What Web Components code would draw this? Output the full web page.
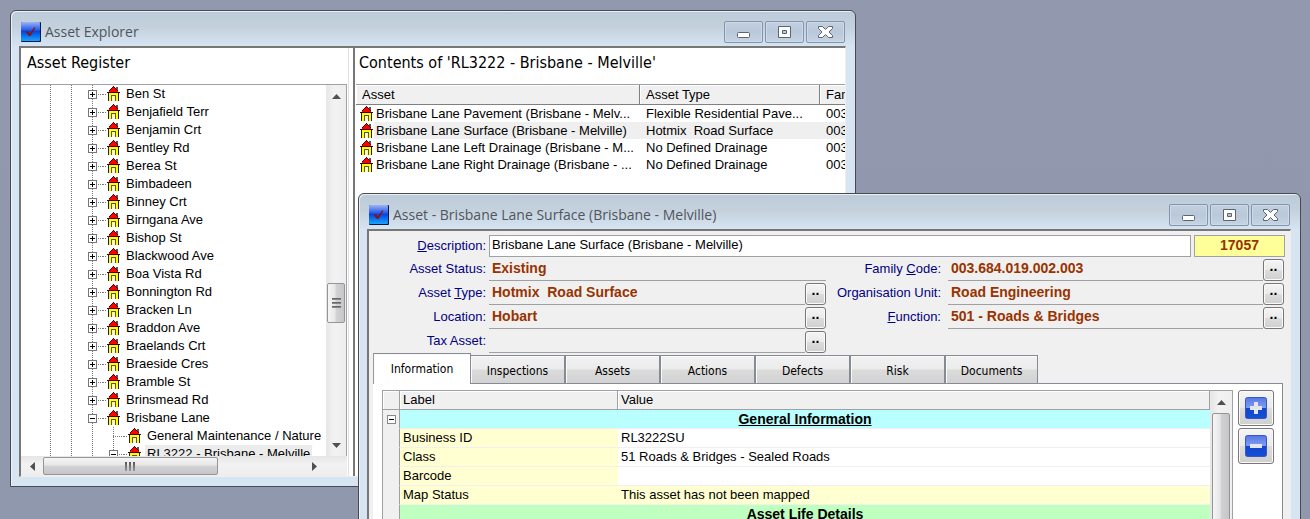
<!DOCTYPE html>
<html lang="en">
<head>
<meta charset="utf-8">
<title>Asset Explorer</title>
<style>
  html, body {
    height: 100%;
  }
  body {
    margin: 0;
    overflow: hidden;
    background: linear-gradient(#9299ae, #9098ae);
    color: #000;
    font: 13px/16px "Liberation Sans", Arial, sans-serif;
  }
  .desktop {
    position: relative;
    height: 100%;
    overflow: hidden;
  }
  /* windows on the desktop */
  .explorer {
    position: absolute;
    left: 10px;
    top: 10px;
    right: 454px;
    bottom: 32px;
  }
  .asset {
    position: absolute;
    left: 358px;
    top: 193px;
    right: 9px;
    min-height: 100%;
  }
  .panes {
    flex: 1;
    display: flex;
    min-width: 0;
    min-height: 0;
  }
  .splitter {
    width: 4px;
    border-left: 1px solid #e0e0e0;
    border-right: 2px solid #777;
    margin: 0 1px;
    background: #fff;
  }
  tree-pane {
    width: 326px;
    flex: none;
  }
  list-pane {
    flex: 1;
    min-width: 0;
  }
</style>
</head>
<body>

<template id="app-window">
  <style>
    *, *:before, *:after {
      box-sizing: border-box;
    }
    :host {
      display: flex;
      flex-direction: column;
      box-sizing: border-box;
      padding: 0 9px 9px 8px;
      border: 1px solid #484a4e;
      border-radius: 6px 6px 0 0;
      background: #d7e4f2;
      background: linear-gradient(#bccbd9, #c4d1dd 16px, #d7e4f2 36px);
      box-shadow: inset 1px 1px 0 #e9f0f7;
    }
    header {
      display: flex;
      align-items: center;
      gap: 4px;
      height: 35px;
      padding: 7px 1px 0 2px;
    }
    h1 {
      flex: 1;
      margin: 0;
      color: #4f555c;
      font: 14px/20px "Open Sans", "Noto Sans", sans-serif;
      white-space: nowrap;
    }
    nav {
      display: flex;
      gap: 2px;
    }
    nav button {
      width: 39px;
      height: 22px;
      padding: 0;
      border: 1px solid #8494ae;
      border-radius: 2px;
      background: linear-gradient(#c2cfde, #b9c9da 50%, #c6d4e3);
      box-shadow: inset 0 0 0 1px #cddae7;
    }
    svg {
      display: block;
      margin: 0 auto;
    }
    main {
      flex: 1;
      display: flex;
      flex-direction: column;
      min-height: 0;
      border: 2px solid #777;
      border-color: #777 #eee #eee #777;
      border-width: 2px 1px 1px 2px;
      background: var(--face, #fff);
    }
  </style>
  <header>
    <svg width="20" height="20" viewBox="0 0 20 20">
      <defs>
        <linearGradient id="g" x1="0" y1="0" x2="0" y2="1">
          <stop offset="0" stop-color="#9db4f4"/>
          <stop offset=".4" stop-color="#2a5fe8"/>
          <stop offset=".5" stop-color="#0546dc"/>
          <stop offset="1" stop-color="#18a4ff"/>
        </linearGradient>
      </defs>
      <rect width="20" height="20" rx="1" fill="#001848"/>
      <rect width="19" height="19" rx="1" fill="url(#g)"/>
      <path d="M4.500 10l2.500-1 2 2.500 4-6 1.500 0L9.500 14H8z" fill="#8a1218"/>
    </svg>
    <h1></h1>
    <nav>
      <button aria-label="Minimize"><svg width="15" height="14"><rect x="1.500" y="7.500" width="12" height="5" rx="1" fill="#fff" stroke="#5c6474"/></svg></button>
      <button aria-label="Maximize"><svg width="14" height="14"><path d="M.5 1.500h12v11H.5z M4.500 5.500v3h4v-3z" fill="#fff" fill-rule="evenodd" stroke="#5c6474"/></svg></button>
      <button aria-label="Close"><svg width="15" height="14"><path d="M.5 1.500h4l3 3 3-3h4v2L11 7l3.500 3.500v2h-4l-3-3-3 3h-4v-2L4 7 .5 3.500z" fill="#fff" stroke="#5c6474" stroke-linejoin="round"/></svg></button>
    </nav>
  </header>
  <main><slot></slot></main>
</template>

<template id="house-icon">
  <style>
    :host {
      display: block;
      flex: none;
      width: 13px;
      height: 15px;
      white-space: normal;
    }
    svg {
      display: block;
    }
  </style>
  <svg width="13" height="15" shape-rendering="crispEdges">
    <path d="M9 1h2v5H9z" fill="#555"/>
    <path d="M2 6h9v9H2z" fill="#ff0"/>
    <path d="M1 7h1v8H1zM11 7h1v8h-1z" fill="#222"/>
    <path d="M6 1h1v1h1v1h1v1h1v1h1v1h1v1H1V6h1V5h1V4h1V3h1V2h1z" fill="#f00"/>
    <path d="M6 0h1v1H6zM5 1h1v1H5zM7 1h1v1H7zM4 2h1v1H4zM8 2h1v1H8zM3 3h1v1H3zM9 3h1v1H9zM2 4h1v1H2zM10 4h1v1h-1zM0 6h13v1H0z" fill="#400"/>
    <path d="M4 9h5v6H4z" fill="#555"/>
    <path d="M5 10h3v5H5z" fill="#ff8"/>
    <path d="M6 11h1v4H6z" fill="#fff"/>
  </svg>
</template>

<template id="scroll-bar">
  <style>
    *, *:before, *:after {
      box-sizing: border-box;
    }
    :host {
      display: flex;
      flex-direction: column;
      flex: none;
      width: 20px;
      background: linear-gradient(90deg, #e6e6e6, #f2f2f2 40%, #eee);
    }
    :host([horizontal]) {
      flex-direction: row;
      width: auto;
      height: 20px;
      background: linear-gradient(#e6e6e6, #f2f2f2 40%, #eee);
    }
    button {
      flex: none;
      width: 100%;
      height: 22px;
      padding: 0;
      border: 0;
      background: none;
    }
    :host([horizontal]) button {
      width: 22px;
      height: 20px;
    }
    svg {
      display: block;
      margin: 0 auto;
    }
    .end svg {
      transform: rotate(180deg);
    }
    :host([horizontal]) svg {
      transform: rotate(-90deg);
    }
    :host([horizontal]) .end svg {
      transform: rotate(90deg);
    }
    .track {
      flex: 1;
      display: flex;
      flex-direction: inherit;
      padding: 0 1px;
      min-height: 0;
      min-width: 0;
    }
    :host([horizontal]) .track {
      padding: 1px 0;
    }
    .before {
      flex: var(--before, 0);
    }
    .after {
      flex: var(--after, 1);
    }
    .thumb {
      flex: var(--thumb, 1);
      display: flex;
      flex-direction: inherit;
      align-items: center;
      justify-content: center;
      gap: 2px;
      border: 1px solid #959595;
      border-radius: 2px;
      background: linear-gradient(90deg, #f6f6f6, #e6e6e6 45%, #d2d2d4 50%, #c6c6ca);
    }
    :host([horizontal]) .thumb {
      background: linear-gradient(#f6f6f6, #e6e6e6 45%, #d2d2d4 50%, #c6c6ca);
    }
    .thumb i {
      width: 9px;
      height: 2px;
      background: linear-gradient(#555, #999);
    }
    :host([horizontal]) .thumb i {
      width: 2px;
      height: 9px;
    }
  </style>
  <button class="start" aria-label="Scroll back"><svg width="9" height="5"><path d="M0 5l4.500-5L9 5z" fill="#505050"/></svg></button>
  <div class="track"><div class="before"></div><div class="thumb"><i></i><i></i><i></i></div><div class="after"></div></div>
  <button class="end" aria-label="Scroll on"><svg width="9" height="5"><path d="M0 5l4.500-5L9 5z" fill="#505050"/></svg></button>
</template>

<template id="tree-pane">
  <style>
    :host {
      display: flex;
      flex-direction: column;
      background: #fff;
    }
    h2 {
      margin: 0;
      height: 37px;
      padding: 5px 6px 0;
      box-sizing: border-box;
      border-bottom: 1px solid #a0a0a8;
      font: 16px/20px "DejaVu Sans Condensed", Tahoma, sans-serif;
    }
    .body {
      flex: 1;
      display: flex;
      min-height: 0;
      border-right: 1px solid #a0a0a8;
    }
    .items {
      flex: 1;
      min-width: 0;
      overflow: hidden;
      padding: 0 0 0 19px;
    }
    .body scroll-bar {
      --before: 176;
      --thumb: 38;
      --after: 111;
    }
    .foot {
      --before: 0;
      --thumb: 174;
      --after: 86;
      padding: 0 22px 0 0;
    }
  </style>
  <h2>Asset Register</h2>
  <div class="body">
    <div class="items"></div>
    <scroll-bar></scroll-bar>
  </div>
  <scroll-bar class="foot" horizontal></scroll-bar>
</template>

<template id="tree-item">
  <style>
    :host {
      display: flex;
      height: 18px;
      align-items: center;
      line-height: 18px;
      white-space: nowrap;
      --dots: repeating-linear-gradient(#777 0 1px, transparent 1px 2px);
    }
    .guide, .node {
      flex: none;
      width: 21px;
      height: 18px;
      background: var(--dots) 10px 0 / 1px 18px no-repeat;
    }
    .node {
      display: flex;
      align-items: center;
      justify-content: center;
      background: var(--dots) 10px 0 / 1px 18px no-repeat,
        repeating-linear-gradient(90deg, #777 0 1px, transparent 1px 2px) 10px 9px / 11px 1px no-repeat;
    }
    .pic {
      flex: none;
      display: flex;
      justify-content: center;
      width: 21px;
      height: 18px;
      background: repeating-linear-gradient(90deg, #777 0 1px, transparent 1px 2px) 0 9px / 3px 1px no-repeat;
    }
    .pic house-icon {
      margin-top: 1px;
    }
    button {
      box-sizing: border-box;
      width: 9px;
      height: 9px;
      padding: 0;
      border: 1px solid #777;
      background: linear-gradient(#000, #000) 1px 3px / 5px 1px no-repeat, #fff;
    }
    button.plus {
      background: linear-gradient(#000, #000) 1px 3px / 5px 1px no-repeat,
        linear-gradient(#000, #000) 3px 1px / 1px 5px no-repeat, #fff;
    }
    .text {
      padding: 0 2px;
    }
    :host([selected]) .text {
      background: #ececec;
    }
  </style>
</template>

<template id="list-pane">
  <style>
    :host {
      display: block;
      overflow: hidden;
      background: #fff;
    }
    h2 {
      margin: 0;
      height: 37px;
      padding: 5px 3px 0;
      box-sizing: border-box;
      border-bottom: 1px solid #a0a0a8;
      font: 16px/20px "DejaVu Sans Condensed", Tahoma, sans-serif;
      white-space: nowrap;
    }
    table {
      table-layout: fixed;
      width: 580px;
      border-collapse: separate;
      border-spacing: 0;
    }
    th {
      box-sizing: border-box;
      height: 20px;
      padding: 1px 6px 0;
      border-right: 1px solid #808080;
      border-bottom: 1px solid #808080;
      box-shadow: inset 1px 1px 0 #fff;
      background: #f0f0f0;
      font-weight: normal;
      text-align: left;
    }
    td {
      height: 17px;
      padding: 0 6px;
      line-height: 17px;
      white-space: pre;
      overflow: hidden;
    }
    td:first-child {
      padding: 0 0 0 4px;
    }
    .name {
      display: flex;
      align-items: center;
      height: 17px;
    }
    .name span {
      flex: 1;
      padding-left: 2px;
    }
    tr.selected td:not(:first-child), tr.selected .name span {
      background: #efefef;
    }
    house-icon {
      margin-right: 1px;
    }
  </style>
  <h2>Contents of 'RL3222 - Brisbane - Melville'</h2>
  <table>
    <colgroup><col style="width: 284px"><col style="width: 180px"><col></colgroup>
    <thead><tr><th>Asset</th><th>Asset Type</th><th>Family</th></tr></thead>
    <tbody></tbody>
  </table>
</template>

<template id="form-field">
  <style>
    :host {
      display: grid;
      grid-template-columns: var(--label, 117px) 1fr auto;
      align-items: end;
      height: 24px;
    }
    label {
      align-self: center;
      text-align: right;
      color: #000080;
      white-space: nowrap;
    }
    input {
      box-sizing: border-box;
      width: calc(100% - var(--gap, 3px));
      min-width: 0;
      height: 22px;
      margin: 0 0 0 var(--gap, 3px);
      padding: 0 3px 4px;
      border: 0;
      border-bottom: 1px solid #a0a0a0;
      background: none;
      color: #993300;
      font: bold 14px/16px "Liberation Sans", Arial, sans-serif;
      outline: none;
    }
    :host([edit]) {
      height: 22px;
    }
    :host([edit]) input {
      padding: 0 2px 3px;
      border: 1px solid #a0a0a8;
      background: #fff;
      color: #000;
      font: inherit;
    }
    button {
      width: 21px;
      height: 22px;
      padding: 0 0 8px;
      border: 1px solid #777;
      border-radius: 3px;
      background: linear-gradient(#f4f4f4, #ebebeb 48%, #dcdcdc 52%, #cfcfcf);
      box-shadow: inset 0 0 0 1px #fafafa;
      font: bold 14px/12px "Liberation Sans", Arial, sans-serif;
    }
  </style>
  <label for="field"><slot></slot></label>
  <input id="field">
</template>

<template id="asset-form">
  <style>
    :host {
      display: block;
      padding: 4px 5px 0 0;
    }
    .top, .cols {
      display: flex;
      gap: 3px;
    }
    .top form-field {
      flex: 1;
    }
    .cols {
      gap: 0;
      padding-right: 1px;
    }
    .cols div {
      flex: 457;
      min-width: 0;
    }
    .cols .right {
      flex: 458;
      --label: 115px;
      --gap: 7px;
    }
    output {
      box-sizing: border-box;
      width: 91px;
      height: 22px;
      border: 1px solid #a0a0a8;
      background: #ffff99;
      color: #993300;
      font: bold 14px/18px "Liberation Sans", Arial, sans-serif;
      text-align: center;
    }
  </style>
  <div class="top">
    <form-field edit value="Brisbane Lane Surface (Brisbane - Melville)"><u>D</u>escription:</form-field>
    <output>17057</output>
  </div>
  <div class="cols">
    <div>
      <form-field value="Existing">Asset Status:</form-field>
      <form-field value="Hotmix  Road Surface" browse>Asset <u>T</u>ype:</form-field>
      <form-field value="Hobart" browse>Location:</form-field>
      <form-field value="" browse>Tax Asset:</form-field>
    </div>
    <div class="right">
      <form-field value="003.684.019.002.003" browse>Family <u>C</u>ode:</form-field>
      <form-field value="Road Engineering" browse>Organisation Unit:</form-field>
      <form-field value="501 - Roads &amp; Bridges" browse><u>F</u>unction:</form-field>
    </div>
  </div>
</template>

<template id="tab-panel">
  <style>
    *, *:before, *:after {
      box-sizing: border-box;
    }
    :host {
      flex: 1;
      display: flex;
      flex-direction: column;
      padding: 0 7px 0 4px;
    }
    .tabs {
      display: flex;
      align-items: flex-end;
      height: 31px;
      box-shadow: inset 0 -1px 0 #868a94;
    }
    .tabs button {
      width: 95px;
      height: 29px;
      padding: 2px 0 0;
      border: 1px solid #868a94;
      border-left-width: 0;
      border-right-width: 2px;
      background: linear-gradient(#f2f2f2, #ebebeb 48%, #dbdbdb 52%, #d2d2d2);
      box-shadow: inset 1px 1px 0 #fafafa;
      font: 12px/16px "DejaVu Sans Condensed", Tahoma, sans-serif;
    }
    .tabs button:last-child {
      width: 92px;
      border-right-width: 1px;
    }
    .tabs button.active {
      width: 98px;
      height: 31px;
      padding: 0;
      border-width: 1px 1px 0;
      border-left-color: #999;
      background: #fff;
    }
    .panel {
      flex: 1;
      display: flex;
      gap: 5px;
      padding: 6px 8px 0 9px;
      border-right: 1px solid #868a94;
      background: #fff;
    }
  </style>
  <div class="tabs" role="tablist"></div>
  <div class="panel"><slot></slot></div>
</template>

<template id="property-grid">
  <style>
    *, *:before, *:after {
      box-sizing: border-box;
    }
    :host {
      flex: 1;
      display: flex;
      min-width: 0;
      border: 1px solid #a0a0a8;
    }
    table {
      flex: 1;
      table-layout: fixed;
      width: 100%;
      height: 0;
      border-collapse: separate;
      border-spacing: 0;
    }
    .gutter {
      width: 17px;
    }
    .label {
      width: 218px;
    }
    th, td {
      height: 19px;
      padding: 0 3px;
      text-align: left;
      font-weight: normal;
      line-height: 18px;
      white-space: nowrap;
    }
    thead th, thead td {
      border-right: 1px solid #a0a0a0;
      border-bottom: 1px solid #a0a0a0;
      box-shadow: inset 1px 1px 0 #fff;
      background: #f0f0f0;
    }
    tbody td, tbody th {
      border-bottom: 1px solid #f0f0f0;
    }
    tbody td:first-child {
      padding: 0;
      border-right: 1px solid #a0a0a0;
      background: #f0f0f0;
    }
    tbody th, tr.shade td + th + td {
      background: #ffffd2;
    }
    tbody .group {
      background: #b9ffff;
      font-weight: bold;
      font-size: 14px;
      text-align: center;
      text-decoration: underline;
    }
    tbody .group.green {
      background: #bfffbf;
    }
    td button {
      display: block;
      width: 9px;
      height: 9px;
      margin: 0 auto;
      padding: 0;
      border: 1px solid #888;
      background: linear-gradient(#000, #000) 1px 3px / 5px 1px no-repeat, #fff;
    }
    scroll-bar {
      width: 22px;
      padding: 0 1px;
      --thumb: 1;
      --after: 0;
    }
  </style>
  <table>
    <colgroup><col class="gutter"><col class="label"><col></colgroup>
    <thead><tr><td></td><th>Label</th><th>Value</th></tr></thead>
    <tbody></tbody>
  </table>
  <scroll-bar></scroll-bar>
</template>

<template id="grid-tools">
  <style>
    :host {
      display: flex;
      flex-direction: column;
      gap: 2px;
    }
    button {
      width: 36px;
      height: 36px;
      padding: 0;
      border: 1px solid #777;
      border-radius: 3px;
      background: linear-gradient(#f4f4f4, #ebebeb 48%, #dcdcdc 52%, #d0d0d0);
      box-shadow: inset 0 0 0 1px #fafafa;
    }
    svg {
      display: block;
      margin: 0 auto;
    }
  </style>
  <button aria-label="Add">
    <svg width="22" height="22">
      <defs><linearGradient id="b" x1="0" y1="0" x2="0" y2="1"><stop offset="0" stop-color="#5577e6"/><stop offset=".48" stop-color="#7f9cf0"/><stop offset=".52" stop-color="#1446c8"/><stop offset="1" stop-color="#0f50d8"/></linearGradient></defs>
      <rect x=".5" y=".5" width="21" height="21" rx="2" fill="url(#b)" stroke="#3a55bb"/>
      <path d="M9 5h4v4h4v4h-4v4H9v-4H5V9h4z" fill="#e4e4ea"/>
    </svg>
  </button>
  <button aria-label="Remove">
    <svg width="22" height="22">
      <rect x=".5" y=".5" width="21" height="21" rx="2" fill="url(#b)" stroke="#3a55bb"/>
      <path d="M5 9h12v4H5z" fill="#e4e4ea"/>
    </svg>
  </button>
</template>

<div class="desktop">
  <app-window class="explorer" caption="Asset Explorer">
    <div class="panes">
      <tree-pane></tree-pane>
      <div class="splitter"></div>
      <list-pane></list-pane>
    </div>
  </app-window>
  <app-window class="asset" caption="Asset - Brisbane Lane Surface (Brisbane - Melville)" style="--face: #f0f0f0">
    <asset-form></asset-form>
    <tab-panel tabs="Information,Inspections,Assets,Actions,Defects,Risk,Documents">
      <property-grid></property-grid>
      <grid-tools></grid-tools>
    </tab-panel>
  </app-window>
</div>

<script>
// attaches a clone of the template that has the element's own name
class TemplateElement extends HTMLElement {
  constructor() {
    super();
    let template = document.getElementById(this.localName);
    this.attachShadow({mode: 'open'}).appendChild(document.importNode(template.content, true));
  }
  $(selector) {
    return this.shadowRoot.querySelector(selector);
  }
}

class HouseIcon extends TemplateElement {}
class ScrollBar extends TemplateElement {}
class AssetForm extends TemplateElement {}
class GridTools extends TemplateElement {}

class AppWindow extends TemplateElement {
  connectedCallback() {
    this.$('h1').textContent = this.getAttribute('caption');
  }
}

class TreeItem extends TemplateElement {
  connectedCallback() {
    let depth = Number(this.getAttribute('depth'));
    let state = this.getAttribute('state');
    let html = '<span class="guide"></span>'.repeat(depth);
    html += '<span class="node">';
    if (state) {
      html += `<button class="${state}" aria-label="Toggle"></button>`;
    }
    html += '</span><span class="pic"><house-icon></house-icon></span><span class="text"></span>';
    this.shadowRoot.innerHTML += html;
    this.$('.text').textContent = this.getAttribute('label');
  }
}

class TreePane extends TemplateElement {
  connectedCallback() {
    let streets = ['Ben St', 'Benjafield Terr', 'Benjamin Crt', 'Bentley Rd', 'Berea St', 'Bimbadeen',
      'Binney Crt', 'Birngana Ave', 'Bishop St', 'Blackwood Ave', 'Boa Vista Rd', 'Bonnington Rd',
      'Bracken Ln', 'Braddon Ave', 'Braelands Crt', 'Braeside Cres', 'Bramble St', 'Brinsmead Rd'];
    streets.forEach(name => this.add(name, 2, 'plus'));
    this.add('Brisbane Lane', 2, 'minus');
    this.add('General Maintenance / Nature', 3, '');
    this.add('RL3222 - Brisbane - Melville', 3, 'minus').setAttribute('selected', '');
  }
  add(label, depth, state) {
    let item = document.createElement('tree-item');
    item.setAttribute('label', label);
    item.setAttribute('depth', depth);
    item.setAttribute('state', state);
    this.$('.items').appendChild(item);
    return item;
  }
}

class ListPane extends TemplateElement {
  connectedCallback() {
    let rows = [
      ['Brisbane Lane Pavement (Brisbane - Melv...', 'Flexible Residential Pave...'],
      ['Brisbane Lane Surface (Brisbane - Melville)', 'Hotmix  Road Surface'],
      ['Brisbane Lane Left Drainage (Brisbane - M...', 'No Defined Drainage'],
      ['Brisbane Lane Right Drainage (Brisbane - ...', 'No Defined Drainage']
    ];
    this.$('tbody').innerHTML = rows.map(([name, type], i) =>
      `<tr class="${i === 1 ? 'selected' : ''}"><td><div class="name"><house-icon></house-icon><span>${name}</span></div></td><td>${type}</td><td>003</td></tr>`
    ).join('');
  }
}

class FormField extends TemplateElement {
  connectedCallback() {
    this.$('input').value = this.getAttribute('value');
    if (this.hasAttribute('browse')) {
      let button = document.createElement('button');
      button.textContent = '..';
      this.shadowRoot.appendChild(button);
    }
  }
}

class TabPanel extends TemplateElement {
  connectedCallback() {
    this.$('.tabs').innerHTML = this.getAttribute('tabs').split(',').map((name, i) =>
      `<button role="tab" class="${i ? '' : 'active'}">${name}</button>`
    ).join('');
  }
}

class PropertyGrid extends TemplateElement {
  connectedCallback() {
    let rows = [
      ['Business ID', 'RL3222SU'],
      ['Class', '51 Roads &amp; Bridges - Sealed Roads'],
      ['Barcode', ''],
      ['Map Status', 'This asset has not been mapped', 'shade']
    ];
    this.$('tbody').innerHTML =
      '<tr><td><button aria-label="Collapse"></button></td><th class="group" colspan="2">General Information</th></tr>' +
      rows.map(([label, value, shade]) =>
        `<tr class="${shade || ''}"><td></td><th>${label}</th><td>${value}</td></tr>`
      ).join('') +
      '<tr><td></td><th class="group green" colspan="2">Asset Life Details</th></tr>';
  }
}

customElements.define('house-icon', HouseIcon);
customElements.define('scroll-bar', ScrollBar);
customElements.define('form-field', FormField);
customElements.define('tree-item', TreeItem);
customElements.define('tree-pane', TreePane);
customElements.define('list-pane', ListPane);
customElements.define('asset-form', AssetForm);
customElements.define('property-grid', PropertyGrid);
customElements.define('grid-tools', GridTools);
customElements.define('tab-panel', TabPanel);
customElements.define('app-window', AppWindow);
</script>
</body>
</html>
